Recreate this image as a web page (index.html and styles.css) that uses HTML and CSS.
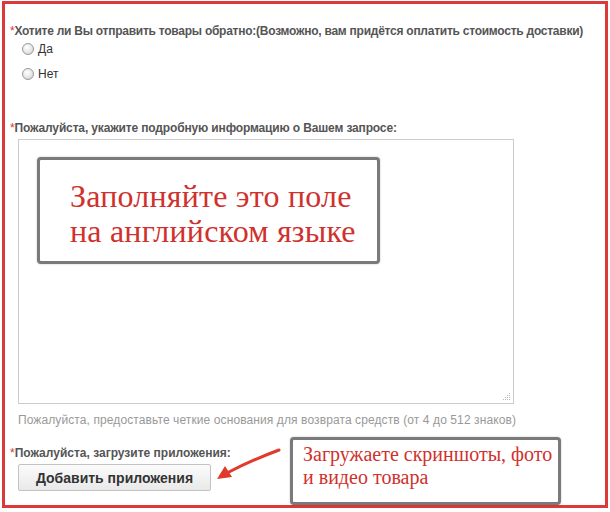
FILE: index.html
```html
<!DOCTYPE html>
<html lang="ru">
<head>
<meta charset="utf-8">
<link rel="stylesheet" href="styles.css">
</head>
<body>
<div class="frame">
  <div class="field">
    <div class="label l1"><span class="req">*</span>Хотите ли Вы отправить товары обратно:(Возможно, вам придётся оплатить стоимость доставки)</div>
    <label class="radio"><span class="dot"></span>Да</label>
    <label class="radio"><span class="dot"></span>Нет</label>
  </div>
  <div class="field f2">
    <div class="label l2"><span class="req">*</span>Пожалуйста, укажите подробную информацию о Вашем запросе:</div>
    <div class="textarea"><span class="grip">
      <svg width="8" height="8" viewBox="0 0 8 8"><g fill="#b8b8b8"><rect x="6" y="0" width="1" height="1"/><rect x="4" y="2" width="1" height="1"/><rect x="6" y="2" width="1" height="1"/><rect x="2" y="4" width="1" height="1"/><rect x="4" y="4" width="1" height="1"/><rect x="6" y="4" width="1" height="1"/><rect x="0" y="6" width="1" height="1"/><rect x="2" y="6" width="1" height="1"/><rect x="4" y="6" width="1" height="1"/><rect x="6" y="6" width="1" height="1"/></g></svg>
    </span></div>
    <div class="hint">Пожалуйста, предоставьте четкие основания для возврата средств (от 4 до 512 знаков)</div>
  </div>
  <div class="field f3">
    <div class="label"><span class="req">*</span>Пожалуйста, загрузите приложения:</div>
    <button class="btn">Добавить приложения</button>
  </div>

  <div class="callout c1">Заполняйте это поле<br>на английском языке</div>
  <div class="callout c2">Загружаете скриншоты, фото<br>и видео товара</div>
  <svg class="arrow" width="70" height="40" viewBox="0 0 70 40">
    <path d="M66 4 C50 10 35 16 14 27" stroke="#e03a2c" stroke-width="3" fill="none" stroke-linecap="round"/>
    <path d="M4 33 L12 20 L19 31 Z" fill="#e03a2c"/>
  </svg>
</div>
</body>
</html>
```
FILE: styles.css
```css
html, body { margin: 0; padding: 0; background: #fff; }
body { font-family: "Liberation Sans", Arial, sans-serif; }
.frame {
  position: relative;
  margin: 1px 2px 0 2px;
  width: 600px;
  height: 501px;
  border: 3px solid #dc3a3a;
  box-sizing: content-box;
}
.field { padding-left: 5px; }
.label { font-size: 12px; font-weight: bold; color: #555; line-height: 14px; white-space: nowrap; }
.l1 { letter-spacing: -0.25px; }
.l2 { letter-spacing: -0.15px; }
.req { color: #d33; font-weight: normal; }
.field:first-child { padding-top: 20px; }
.radio { display: flex; align-items: center; font-size: 12px; color: #333; margin-left: 12px; height: 14px; }
.radio:first-of-type { margin-top: 4px; }
.radio + .radio { margin-top: 11px; }
.dot {
  width: 12px; height: 12px; border-radius: 50%;
  border: 1px solid #9a9a9a;
  background: radial-gradient(circle at 40% 35%, #fff 0%, #e6e6e6 55%, #c8c8c8 100%);
  margin-right: 4px; box-sizing: border-box;
}
.f2 { margin-top: 40px; }
.textarea {
  position: relative;
  margin: 4px 0 0 8px;
  width: 494px; height: 263px;
  border: 1px solid #ccc;
}
.grip { position: absolute; right: 2px; bottom: 2px; line-height: 0; }
.hint { font-size: 12px; color: #999; margin: 9px 0 0 8px; line-height: 14px; letter-spacing: 0.1px; white-space: nowrap; }
.f3 { margin-top: 19px; }
.btn {
  display: block;
  margin: 4px 0 0 8px;
  width: 193px; height: 27px;
  border: 1px solid #c3c3c3; border-radius: 2px;
  background: linear-gradient(#fbfbfb, #e9e9e9);
  font-family: "Liberation Sans", Arial, sans-serif;
  font-size: 14px; font-weight: bold; color: #333;
  padding: 0;
}
.callout {
  position: absolute;
  border: 3px solid #7a7a7a;
  border-radius: 4px;
  background: #fff;
  box-shadow: 0 0 2px rgba(0,0,0,0.25);
  color: #d0312d;
  font-family: "Liberation Serif", "Times New Roman", serif;
  box-sizing: border-box;
  white-space: nowrap;
}
.c1 { left: 32px; top: 153px; width: 343px; height: 107px; font-size: 32px; line-height: 35px; padding: 19px 0 0 30px; letter-spacing: 0.2px; }
.c2 { left: 285px; top: 433px; width: 271px; height: 68px; font-size: 20px; line-height: 23px; padding: 3px 0 0 10px; }
.arrow { position: absolute; left: 208px; top: 442px; }
```
